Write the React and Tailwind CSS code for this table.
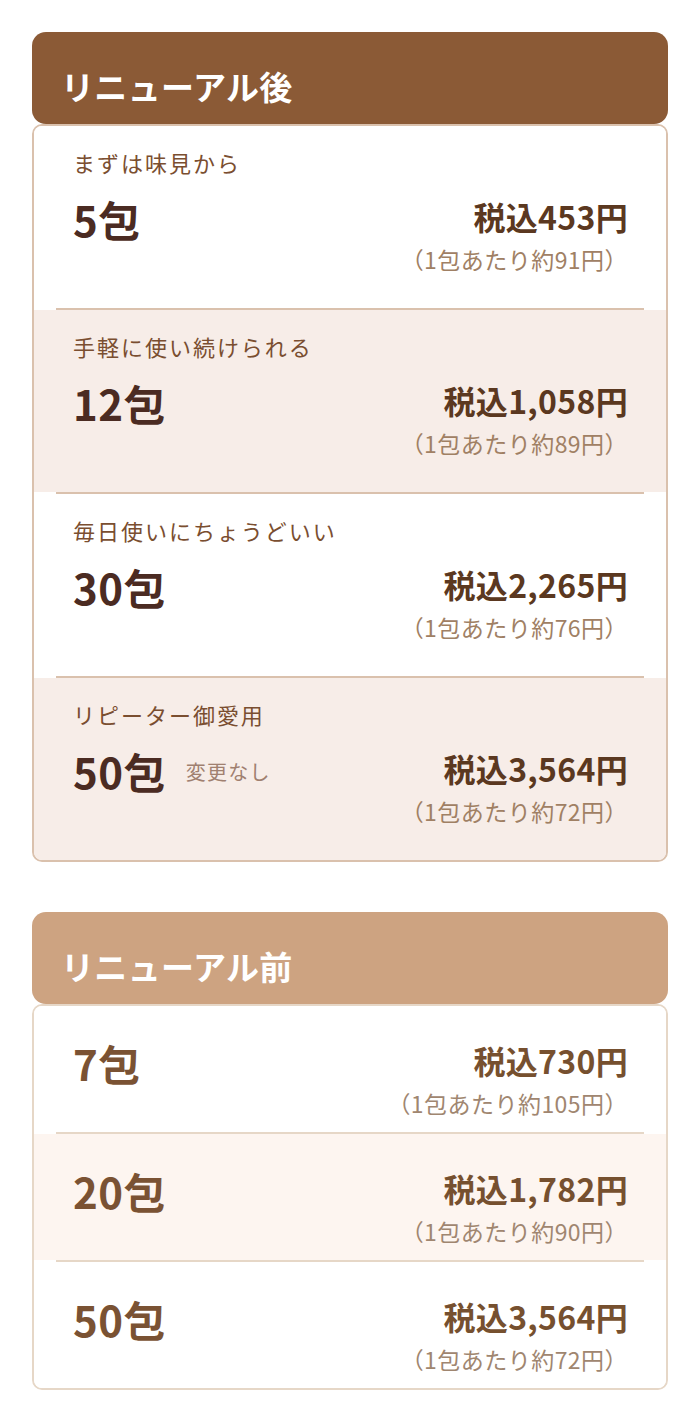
import React from "react";

const after = [
  { label: "まずは味見から", qty: "5包", price: "税込453円", per: "（1包あたり約91円）", alt: false },
  { label: "手軽に使い続けられる", qty: "12包", price: "税込1,058円", per: "（1包あたり約89円）", alt: true },
  { label: "毎日使いにちょうどいい", qty: "30包", price: "税込2,265円", per: "（1包あたり約76円）", alt: false },
  { label: "リピーター御愛用", qty: "50包", note: "変更なし", price: "税込3,564円", per: "（1包あたり約72円）", alt: true },
];

const before = [
  { qty: "7包", price: "税込730円", per: "（1包あたり約105円）", alt: false },
  { qty: "20包", price: "税込1,782円", per: "（1包あたり約90円）", alt: true },
  { qty: "50包", price: "税込3,564円", per: "（1包あたり約72円）", alt: false },
];

const AfterRow = ({ item }) => (
  <div className={`pl-[39px] pr-[38px] pt-[21px] pb-[34px] ${item.alt ? "bg-[#f7ede8]" : "bg-white"}`}>
    <p className="text-[22px] leading-[30px] tracking-[0.09em] text-[#7a4e30]">{item.label}</p>
    <div className="mt-[17px] flex items-start justify-between">
      <div className="flex items-center gap-[20px]">
        <span className="text-[42px] leading-[50px] font-bold tracking-[0.01em] text-[#4b2b22]">{item.qty}</span>
        {item.note && (
          <span className="text-[20px] leading-[30px] tracking-[0.06em] text-[#a08070] mt-[2px]">{item.note}</span>
        )}
      </div>
      <div className="mt-[2px] flex flex-col items-end">
        <span className="text-[32px] leading-[40px] font-bold tracking-[0.01em] text-[#5b3820]">{item.price}</span>
        <span className="mt-[8px] text-[23px] leading-[30px] tracking-[0.02em] text-[#a08064]">{item.per}</span>
      </div>
    </div>
  </div>
);

const BeforeRow = ({ item }) => (
  <div className={`pl-[39px] pr-[38px] pt-[32px] pb-[14px] flex items-start justify-between ${item.alt ? "bg-[#fdf5f0]" : "bg-white"}`}>
    <span className="text-[42px] leading-[50px] font-bold tracking-[0.01em] text-[#7a5233]">{item.qty}</span>
    <div className="mt-[2px] flex flex-col items-end">
      <span className="text-[32px] leading-[40px] font-bold tracking-[0.01em] text-[#76502f]">{item.price}</span>
      <span className="mt-[8px] text-[23px] leading-[30px] tracking-[0.02em] text-[#a08670]">{item.per}</span>
    </div>
  </div>
);

const Divider = ({ color }) => (
  <div className="bg-white">
    <div className={`mx-[22px] h-[2px] ${color}`} />
  </div>
);

export default function App() {
  return (
    <div
      className="min-h-[1420px] bg-white px-[32px] pt-[32px]"
      style={{ fontFamily: '"Noto Sans CJK JP", "Noto Sans", sans-serif' }}
    >
      {/* after renewal */}
      <div className="h-[92px] rounded-[14px] bg-[#8b5a36] pl-[29px] pt-[34px]">
        <h2 className="text-[33px] leading-[40px] font-bold tracking-[0.01em] text-white">リニューアル後</h2>
      </div>
      <div className="overflow-hidden rounded-[10px] border-2 border-[#dac1ad]">
        {after.map((item, i) => (
          <React.Fragment key={item.qty}>
            {i > 0 && <Divider color="bg-[#dac1ad]" />}
            <AfterRow item={item} />
          </React.Fragment>
        ))}
      </div>

      {/* before renewal */}
      <div className="mt-[50px] h-[92px] rounded-[14px] bg-[#cda381] pl-[29px] pt-[34px]">
        <h2 className="text-[33px] leading-[40px] font-bold tracking-[0.01em] text-white">リニューアル前</h2>
      </div>
      <div className="overflow-hidden rounded-[10px] border-2 border-[#e6d7c7]">
        {before.map((item, i) => (
          <React.Fragment key={item.price + i}>
            {i > 0 && <Divider color="bg-[#e6d7c7]" />}
            <BeforeRow item={item} />
          </React.Fragment>
        ))}
      </div>
    </div>
  );
}
